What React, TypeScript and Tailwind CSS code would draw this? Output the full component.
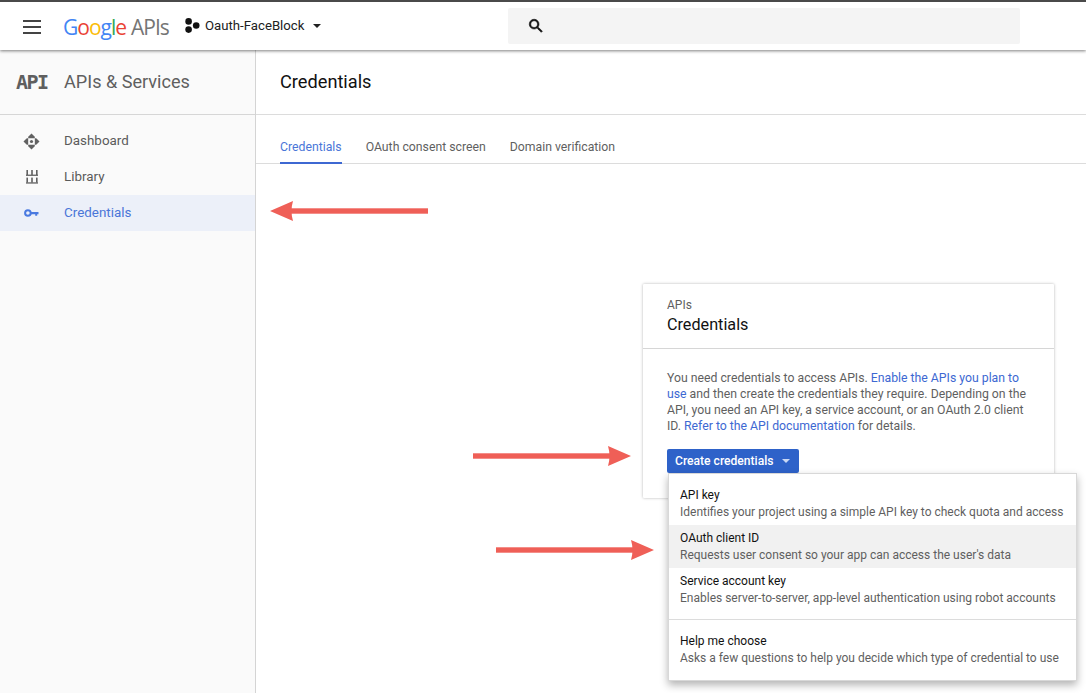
const sans = "font-['Roboto',sans-serif]";

function Arrow({ className, flip }: { className: string; flip?: boolean }) {
  return (
    <svg className={`absolute ${className}`} width="158" height="20" viewBox="0 0 158 20">
      <g fill="#ef5f57" transform={flip ? "translate(158 0) scale(-1 1)" : undefined}>
        <rect x="0" y="7.3" width="138" height="5.4" />
        <path d="M135 0 L158 10 L135 20 Q138 10 135 0 Z" />
      </g>
    </svg>
  );
}

function DashboardIcon() {
  return (
    <svg width="17" height="17" viewBox="0 0 17 17" fill="#616161">
      <path d="M8.5 0.5 L11.8 3.8 V5.2 H5.2 V3.8 Z" />
      <path d="M8.5 16.5 L5.2 13.2 V11.8 H11.8 V13.2 Z" />
      <path d="M0.5 8.5 L3.8 5.2 H5.2 V11.8 H3.8 Z" />
      <path d="M16.5 8.5 L13.2 11.8 H11.8 V5.2 H13.2 Z" />
      <circle cx="8.5" cy="8.5" r="2.6" fill="#fafafa" />
      <circle cx="8.5" cy="8.5" r="1.6" />
    </svg>
  );
}

function LibraryIcon() {
  return (
    <svg width="14" height="14" viewBox="0 0 14 14" fill="#616161">
      <rect x="1.4" y="0" width="1.6" height="5" />
      <rect x="6.2" y="0" width="1.6" height="5" />
      <rect x="11" y="0" width="1.6" height="5" />
      <rect x="1" y="4.6" width="12" height="1.3" />
      <rect x="1.4" y="7.6" width="1.6" height="5" />
      <rect x="6.2" y="7.6" width="1.6" height="5" />
      <rect x="11" y="7.6" width="1.6" height="5" />
      <rect x="1" y="12.3" width="12" height="1.3" />
    </svg>
  );
}

function KeyIcon() {
  return (
    <svg width="15" height="10" viewBox="0 0 15 10" fill="none">
      <circle cx="3.9" cy="5" r="2.8" stroke="#4a7ae0" strokeWidth="2" />
      <path d="M6.5 3.9 H14.5 V6.2 H13.2 V7.8 H11.2 V6.2 H6.5 Z" fill="#4a7ae0" />
    </svg>
  );
}

function ProjectDots() {
  return (
    <svg width="15" height="15" viewBox="0 0 15 15" fill="#111">
      <circle cx="3.6" cy="3.4" r="3.3" />
      <circle cx="3.6" cy="11.6" r="3.3" />
      <circle cx="11.2" cy="7.5" r="3.3" />
    </svg>
  );
}

function SearchIcon() {
  return (
    <svg width="18" height="18" viewBox="0 0 24 24" fill="#111" stroke="#111" strokeWidth="0.8">
      <path d="M15.5 14h-.79l-.28-.27A6.47 6.47 0 0 0 16 9.5 6.5 6.5 0 1 0 9.5 16c1.61 0 3.09-.59 4.23-1.57l.27.28v.79l5 4.99L20.49 19l-4.99-5zm-6 0C7.01 14 5 11.99 5 9.5S7.01 5 9.5 5 14 7.01 14 9.5 11.99 14 9.5 14z" />
    </svg>
  );
}

const navItems = [
  { label: "Dashboard", icon: <DashboardIcon /> },
  { label: "Library", icon: <LibraryIcon /> },
  { label: "Credentials", icon: <KeyIcon />, active: true },
];

const menuItems = [
  { title: "API key", desc: "Identifies your project using a simple API key to check quota and access" },
  { title: "OAuth client ID", desc: "Requests user consent so your app can access the user's data", hover: true },
  { title: "Service account key", desc: "Enables server-to-server, app-level authentication using robot accounts" },
];

export default function App() {
  return (
    <div className={`relative h-[693px] w-[1086px] overflow-hidden bg-white ${sans}`}>
      {/* Top bar */}
      <header className="relative z-10 flex h-[50px] items-center border-t-2 border-[#4a4a4a] bg-white pt-[1px] shadow-[0_1px_3px_rgba(0,0,0,0.5)]">
        <div className="ml-[23px] flex w-[18px] flex-col gap-[4px]">
          <span className="h-[2px] bg-[#444]" />
          <span className="h-[2px] bg-[#444]" />
          <span className="h-[2px] bg-[#444]" />
        </div>
        <div className="ml-[22px] flex w-[122px] items-baseline whitespace-nowrap font-['Open_Sans',sans-serif] text-[21px] leading-[28px] tracking-[-1px]">
          <span className="text-[#4285f4]">G</span>
          <span className="text-[#ea4335]">o</span>
          <span className="text-[#fbbc05]">o</span>
          <span className="text-[#4285f4]">g</span>
          <span className="text-[#34a853]">l</span>
          <span className="text-[#ea4335]">e</span>
          <span className="ml-[5px] text-[#757575]">APIs</span>
        </div>
        <div className="-mt-[1px] flex items-center">
          <ProjectDots />
          <span className="ml-[5px] text-[13.2px] text-[#212121]">Oauth-FaceBlock</span>
          <span className="ml-[9px] h-0 w-0 border-x-[4px] border-t-[4px] border-x-transparent border-t-[#212121]" />
        </div>
        <div className="ml-[auto] mr-[66px] -mt-[1px] flex h-[36px] w-[512px] items-center rounded-[2px] bg-[#f4f4f4] pl-[19px]">
          <SearchIcon />
        </div>
      </header>

      <div className="flex h-[643px]">
        {/* Sidebar */}
        <aside className="w-[256px] shrink-0 border-r border-[#d4d4d4] bg-[#fafafa]">
          <div className="flex h-[65px] items-center border-b border-[#d6d6d6]">
            <span className="ml-[16px] w-[48px] font-['DejaVu_Sans_Mono',monospace] text-[20px] font-bold tracking-[-1.6px] text-[#5f5f5f]">
              API
            </span>
            <span className="text-[18.1px] text-[#5f5f5f]">APIs &amp; Services</span>
          </div>
          <nav className="pt-[8px]">
            {navItems.map((item) => (
              <div
                key={item.label}
                className={`flex h-[36px] items-center text-[13.4px] ${
                  item.active ? "bg-[#ecf0f9] text-[#4a76d8]" : "text-[#5a5a5a]"
                }`}
              >
                <span className="flex w-[64px] justify-center pr-[1px]">{item.icon}</span>
                <span>{item.label}</span>
              </div>
            ))}
          </nav>
        </aside>

        {/* Main */}
        <main className="min-w-0 flex-1">
          <div className="flex h-[65px] items-center border-b border-[#dcdcdc] pl-[24px] text-[18.2px] text-[#111]">
            Credentials
          </div>
          <div className="mt-[16px] flex h-[33px] gap-[24px] border-b border-[#dcdcdc] pl-[24px] text-[12.25px]">
            <span className="h-[33px] border-b-2 border-[#3d68d2] pt-[7px] text-[#4a76d8]">Credentials</span>
            <span className="pt-[7px] text-[#5f5f5f]">OAuth consent screen</span>
            <span className="pt-[7px] text-[#5f5f5f]">Domain verification</span>
          </div>

          {/* Card */}
          <section className="ml-[387px] mt-[120px] h-[214px] w-[411px] rounded-[1px] bg-white shadow-[0_0_3px_rgba(0,0,0,0.3)]">
            <div className="h-[65px] border-b border-[#d6d6d6] pl-[24px] pt-[14px]">
              <div className="text-[12px] leading-[14px] text-[#5f5f5f]">APIs</div>
              <div className="mt-[3px] text-[16.2px] leading-[20px] text-[#111]">Credentials</div>
            </div>
            <div className="mx-[24px] mt-[21px] whitespace-nowrap text-[12.25px] leading-[16px] text-[#5f5f5f]">
              <div>
                You need credentials to access APIs. <span className="text-[#3d68d2]">Enable the APIs you plan to</span>
              </div>
              <div>
                <span className="text-[#3d68d2]">use</span> and then create the credentials they require. Depending on
                the
              </div>
              <div>API, you need an API key, a service account, or an OAuth 2.0 client</div>
              <div>
                ID. <span className="text-[#3d68d2]">Refer to the API documentation</span> for details.
              </div>
            </div>
            <div className="ml-[24px] mt-[15px] flex h-[24px] w-[132px] items-center rounded-[2px] bg-[#2e62c9] pl-[8px] text-[12.1px] font-medium text-white">
              Create credentials
              <span className="ml-[9px] h-0 w-0 border-x-[4px] border-t-[4px] border-x-transparent border-t-[#c9d8f4]" />
            </div>
          </section>
        </main>
      </div>

      {/* Dropdown */}
      <div className="absolute left-[668px] top-[473px] z-20 h-[208px] w-[409px] border border-[#d8d8d8] bg-white pt-[8px] shadow-[0_4px_8px_rgba(0,0,0,0.3)]">
        {menuItems.map((m) => (
          <div key={m.title} className={`h-[43px] pl-[11px] pt-[5px] ${m.hover ? "bg-[#f1f1f1]" : ""}`}>
            <div className="text-[12px] leading-[17px] text-[#111]">{m.title}</div>
            <div className="text-[12px] leading-[17px] text-[#5f5f5f]">{m.desc}</div>
          </div>
        ))}
        <div className="mt-[8px] h-[60px] border-t border-[#dcdcdc] pl-[11px] pt-[13px]">
          <div className="text-[12px] leading-[17px] text-[#111]">Help me choose</div>
          <div className="text-[12px] leading-[17px] text-[#5f5f5f]">
            Asks a few questions to help you decide which type of credential to use
          </div>
        </div>
      </div>

      {/* Annotation arrows */}
      <Arrow className="left-[270px] top-[201px] z-30" flip />
      <Arrow className="left-[473px] top-[446px] z-30" />
      <Arrow className="left-[496px] top-[540px] z-30" />
    </div>
  );
}
